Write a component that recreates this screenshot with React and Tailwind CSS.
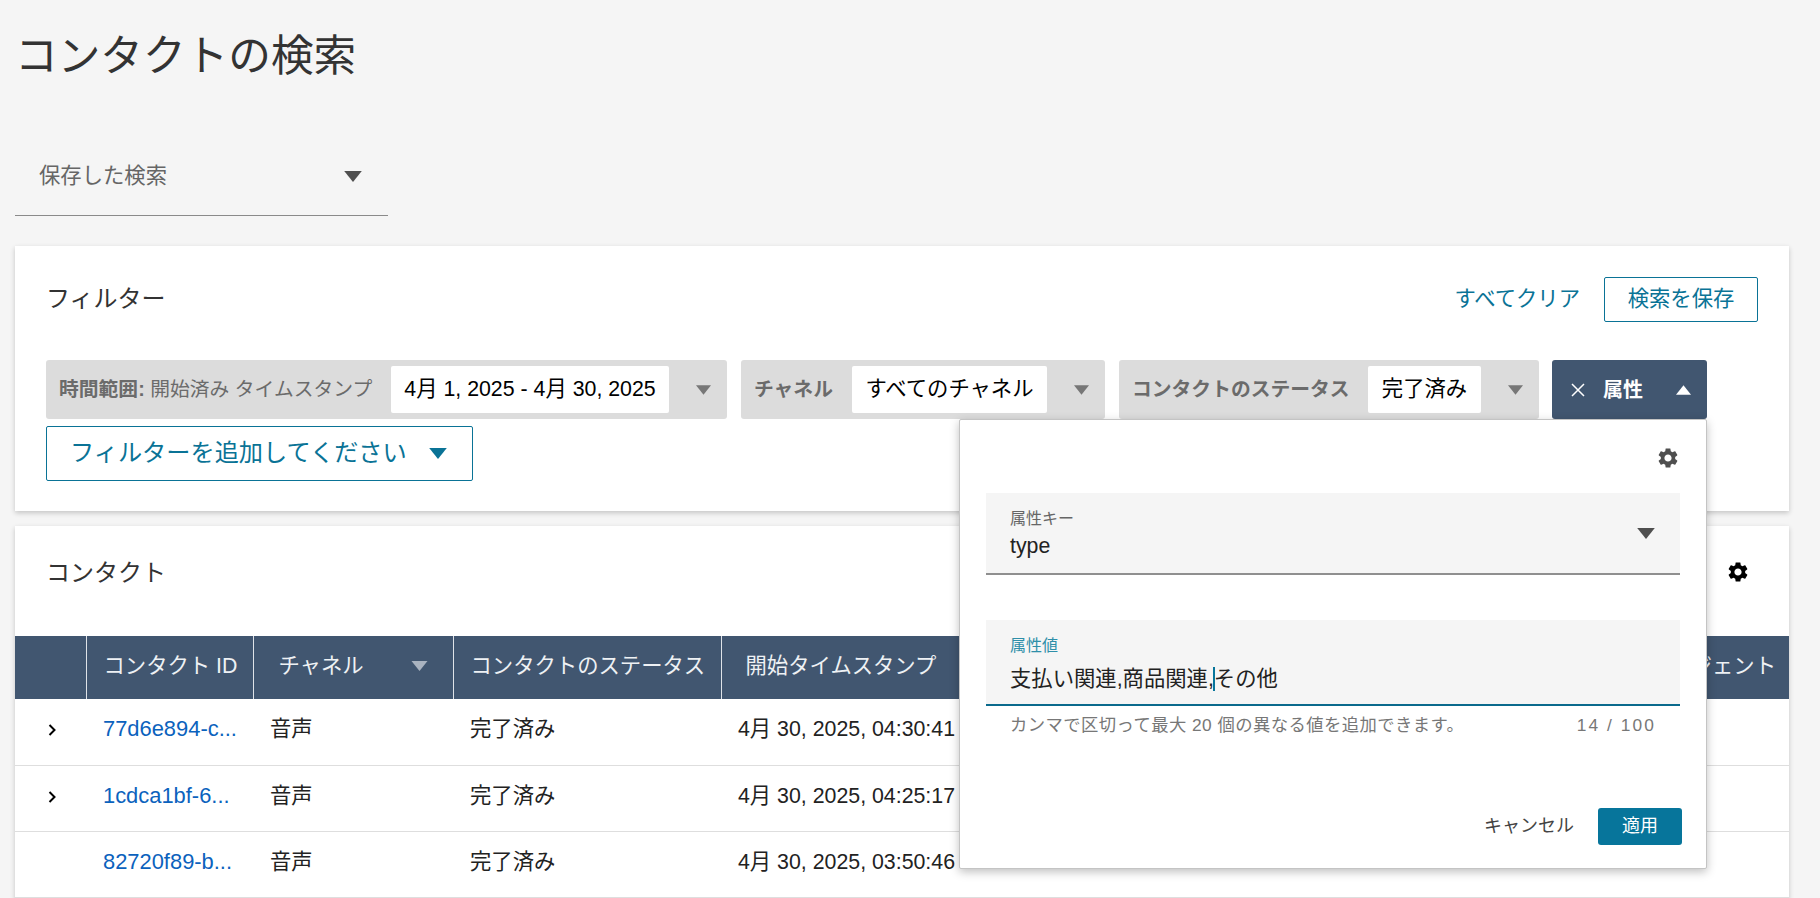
import React from "react";

const FONT = "font-['Liberation_Sans','Noto_Sans_CJK_JP',sans-serif]";

const Caret = ({ className = "", up = false }) => (
  <svg viewBox="0 0 16 10" className={`fill-current ${className}`}>
    <polygon points={up ? "8,0 16,10 0,10" : "0,0 16,0 8,10"} />
  </svg>
);

const Gear = ({ className = "" }) => (
  <svg viewBox="0 0 24 24" className={`fill-current ${className}`}>
    <path d="M19.14 12.94c.04-.3.06-.61.06-.94 0-.32-.02-.64-.07-.94l2.03-1.58c.18-.14.23-.41.12-.61l-1.92-3.32c-.12-.22-.37-.29-.59-.22l-2.39.96c-.5-.38-1.03-.7-1.62-.94l-.36-2.54c-.04-.24-.24-.41-.48-.41h-3.84c-.24 0-.43.17-.47.41l-.36 2.54c-.59.24-1.13.57-1.62.94l-2.39-.96c-.22-.08-.47 0-.59.22L2.74 8.87c-.12.21-.08.47.12.61l2.03 1.58c-.05.3-.09.63-.09.94s.02.64.07.94l-2.03 1.58c-.18.14-.23.41-.12.61l1.92 3.32c.12.22.37.29.59.22l2.39-.96c.5.38 1.03.7 1.62.94l.36 2.54c.05.24.24.41.48.41h3.84c.24 0 .44-.17.47-.41l.36-2.54c.59-.24 1.13-.56 1.62-.94l2.39.96c.22.08.47 0 .59-.22l1.92-3.32c.12-.22.07-.47-.12-.61l-2.01-1.58zM12 15.6c-1.98 0-3.6-1.62-3.6-3.6s1.62-3.6 3.6-3.6 3.6 1.62 3.6 3.6-1.62 3.6-3.6 3.6z" />
  </svg>
);

const FilterChip = ({ labelWidth, boxWidth, value, children }) => (
  <div className="flex h-[59px] items-center rounded-[3px] bg-[#dcdcdc] pl-[13px]">
    <div className={`${labelWidth} whitespace-nowrap text-[19.8px] leading-[28px] text-[#6b6b6b] -mt-[2px]`}>
      {children}
    </div>
    <div className={`${boxWidth} flex h-[47px] items-center justify-center whitespace-nowrap rounded-[2px] bg-white pt-[1px] text-[21.33px] text-black`}>
      {value}
    </div>
    <div className="flex w-[58px] justify-center pl-[11px] text-[#777]">
      <Caret className="h-[10px] w-[15px]" />
    </div>
  </div>
);

const AttributePopover = () => (
  <div className="absolute right-0 top-full z-10 flex h-[450px] w-[748px] flex-col rounded-[2px] border border-[#c4c4c4] bg-white px-[26px] pt-[26px] shadow-[0_3px_10px_rgba(0,0,0,0.25)]">
    <div className="flex justify-end">
      <Gear className="h-[24px] w-[24px] text-[#4f4f4f]" />
    </div>
    <div className="mt-[23px] flex h-[82px] items-start justify-between border-b-2 border-[#8f8f8f] bg-[#f5f5f5] px-[24px] pt-[16px]">
      <div>
        <div className="text-[16px] leading-[20px] text-[#666]">属性キー</div>
        <div className="mt-[3px] text-[21.33px] leading-[28px] text-[#222]">type</div>
      </div>
      <Caret className="mr-[1px] mt-[19px] h-[11px] w-[18px] text-[#4f4f4f]" />
    </div>
    <div className="mt-[45px] h-[86px] border-b-2 border-[#0a6a8c] bg-[#f5f5f5] px-[24px] pt-[16px]">
      <div className="text-[16px] leading-[20px] text-[#2e8fa9]">属性値</div>
      <div className="mt-[9px] flex items-center text-[21.33px] leading-[28px] text-[#222]">
        支払い関連,商品関連,
        <span className="-mx-[1px] h-[24px] w-[2px] bg-[#07759b]" />
        その他
      </div>
    </div>
    <div className="mt-[9px] flex justify-between px-[24px] text-[17.33px] leading-[20px] tracking-[0.025em] text-[#777]">
      <span>カンマで区切って最大 20 個の異なる値を追加できます。</span>
      <span className="tracking-[0.12em]">14 / 100</span>
    </div>
    <div className="mt-auto mb-[23px] -mr-[2px] flex items-center justify-end gap-[24px]">
      <span className="text-[18px] text-[#444]">キャンセル</span>
      <button className="h-[37px] w-[84px] rounded-[3px] bg-[#07759b] text-[18px] text-white">適用</button>
    </div>
  </div>
);

const rows = [
  { id: "77d6e894-c...", time: "4月 30, 2025, 04:30:41", expandable: true },
  { id: "1cdca1bf-6...", time: "4月 30, 2025, 04:25:17", expandable: true },
  { id: "82720f89-b...", time: "4月 30, 2025, 03:50:46", expandable: false },
];

export default function App() {
  return (
    <div className={`${FONT} h-[898px] overflow-hidden bg-[#f5f5f5] pl-[15px] pr-[31px] pt-[31px]`}>
      <h1 className="text-[42.67px] leading-[50px] text-[#333]">コンタクトの検索</h1>

      <div className="mt-[53px] flex h-[82px] w-[373px] items-center justify-between border-b border-[#8a8a8a] pl-[24px] pr-[26px] pt-[4px]">
        <span className="text-[21.33px] text-[#666]">保存した検索</span>
        <Caret className="h-[11px] w-[18px] text-[#4f4f4f]" />
      </div>

      <section className="mt-[30px] h-[265px] bg-white px-[31px] pt-[31px] shadow-[0_2px_5px_rgba(0,0,0,0.2)]">
        <div className="flex h-[45px] items-center justify-between">
          <h2 className="-mt-[2px] text-[24px] text-[#333]">フィルター</h2>
          <div className="flex items-center gap-[24px]">
            <a className="text-[21.33px] text-[#0a7396]">すべてクリア</a>
            <button className="h-[45px] w-[154px] rounded-[2px] border border-[#0a7396] text-[21.33px] text-[#0a7396]">検索を保存</button>
          </div>
        </div>

        <div className="mt-[38px] flex gap-[14px]">
          <FilterChip labelWidth="w-[332px]" boxWidth="w-[278px]" value="4月 1, 2025 - 4月 30, 2025">
            <b className="font-bold">時間範囲:</b> 開始済み タイムスタンプ
          </FilterChip>
          <FilterChip labelWidth="w-[98px]" boxWidth="w-[195px]" value="すべてのチャネル">
            <b className="font-bold">チャネル</b>
          </FilterChip>
          <FilterChip labelWidth="w-[236px]" boxWidth="w-[113px]" value="完了済み">
            <b className="font-bold">コンタクトのステータス</b>
          </FilterChip>
          <div className="relative -ml-[1px] flex h-[59px] w-[155px] items-center rounded-[3px] bg-[#415670] pl-[19px] text-white">
            <svg viewBox="0 0 14 14" className="h-[14px] w-[14px] fill-none stroke-current stroke-[1.5]">
              <path d="M1 1l12 12M13 1L1 13" />
            </svg>
            <b className="ml-[18px] text-[20px] font-bold">属性</b>
            <Caret up className="ml-[33px] h-[10px] w-[15px]" />
            <AttributePopover />
          </div>
        </div>

        <button className="mt-[7px] flex h-[55px] w-[427px] items-center rounded-[2px] border border-[#0a7396] pl-[23px] text-[24.2px] text-[#0a7396]">
          フィルターを追加してください
          <Caret className="ml-[21px] h-[11px] w-[20px]" />
        </button>
      </section>

      <section className="mt-[15px] h-[400px] bg-white shadow-[0_2px_5px_rgba(0,0,0,0.2)]">
        <div className="flex h-[110px] items-start justify-between pl-[31px] pr-[39px] pt-[29px]">
          <h2 className="text-[24px] leading-[36px] text-[#333]">コンタクト</h2>
          <Gear className="mt-[5px] h-[24px] w-[24px] text-black" />
        </div>

        <table className="w-full table-fixed border-collapse text-[21.33px]">
          <colgroup>
            <col className="w-[71px]" />
            <col className="w-[167px]" />
            <col className="w-[200px]" />
            <col className="w-[268px]" />
            <col className="w-[238px]" />
            <col />
          </colgroup>
          <thead className="bg-[#415670] text-left font-normal text-[#eef1f4]">
            <tr className="h-[63px]">
              <th className="border-r border-[#dfe3e8]" />
              <th className="border-r border-[#dfe3e8] pb-[2px] pl-[17px] font-normal">コンタクト ID</th>
              <th className="border-r border-[#dfe3e8] pb-[2px] pl-[25px] pr-[25px] font-normal">
                <div className="flex items-center justify-between">
                  チャネル
                  <Caret className="h-[10px] w-[17px] text-[#a9b3c0]" />
                </div>
              </th>
              <th className="whitespace-nowrap border-r border-[#dfe3e8] pb-[2px] pl-[17px] font-normal">コンタクトのステータス</th>
              <th className="whitespace-nowrap pb-[2px] pl-[24px] font-normal">開始タイムスタンプ</th>
              <th className="whitespace-nowrap pb-[2px] pr-[13px] text-right font-normal">エージェント</th>
            </tr>
          </thead>
          <tbody className="text-[#222]">
            {rows.map((row) => (
              <tr key={row.id} className="h-[66px] border-b border-[#dedede] align-top">
                <td className="pl-[33px] pt-[25px]">
                  {row.expandable && (
                    <svg viewBox="0 0 8 12" className="h-[12px] w-[8px] fill-none stroke-black stroke-2">
                      <path d="M1.5 1l5 5-5 5" />
                    </svg>
                  )}
                </td>
                <td className="pl-[17px] pt-[16px] text-[21.9px] leading-[28px] text-[#0b62bd]">{row.id}</td>
                <td className="pl-[17px] pt-[16px] leading-[28px]">音声</td>
                <td className="pl-[17px] pt-[16px] leading-[28px]">完了済み</td>
                <td className="whitespace-nowrap pl-[17px] pt-[16px] leading-[28px]">{row.time}</td>
                <td />
              </tr>
            ))}
          </tbody>
        </table>
      </section>
    </div>
  );
}
